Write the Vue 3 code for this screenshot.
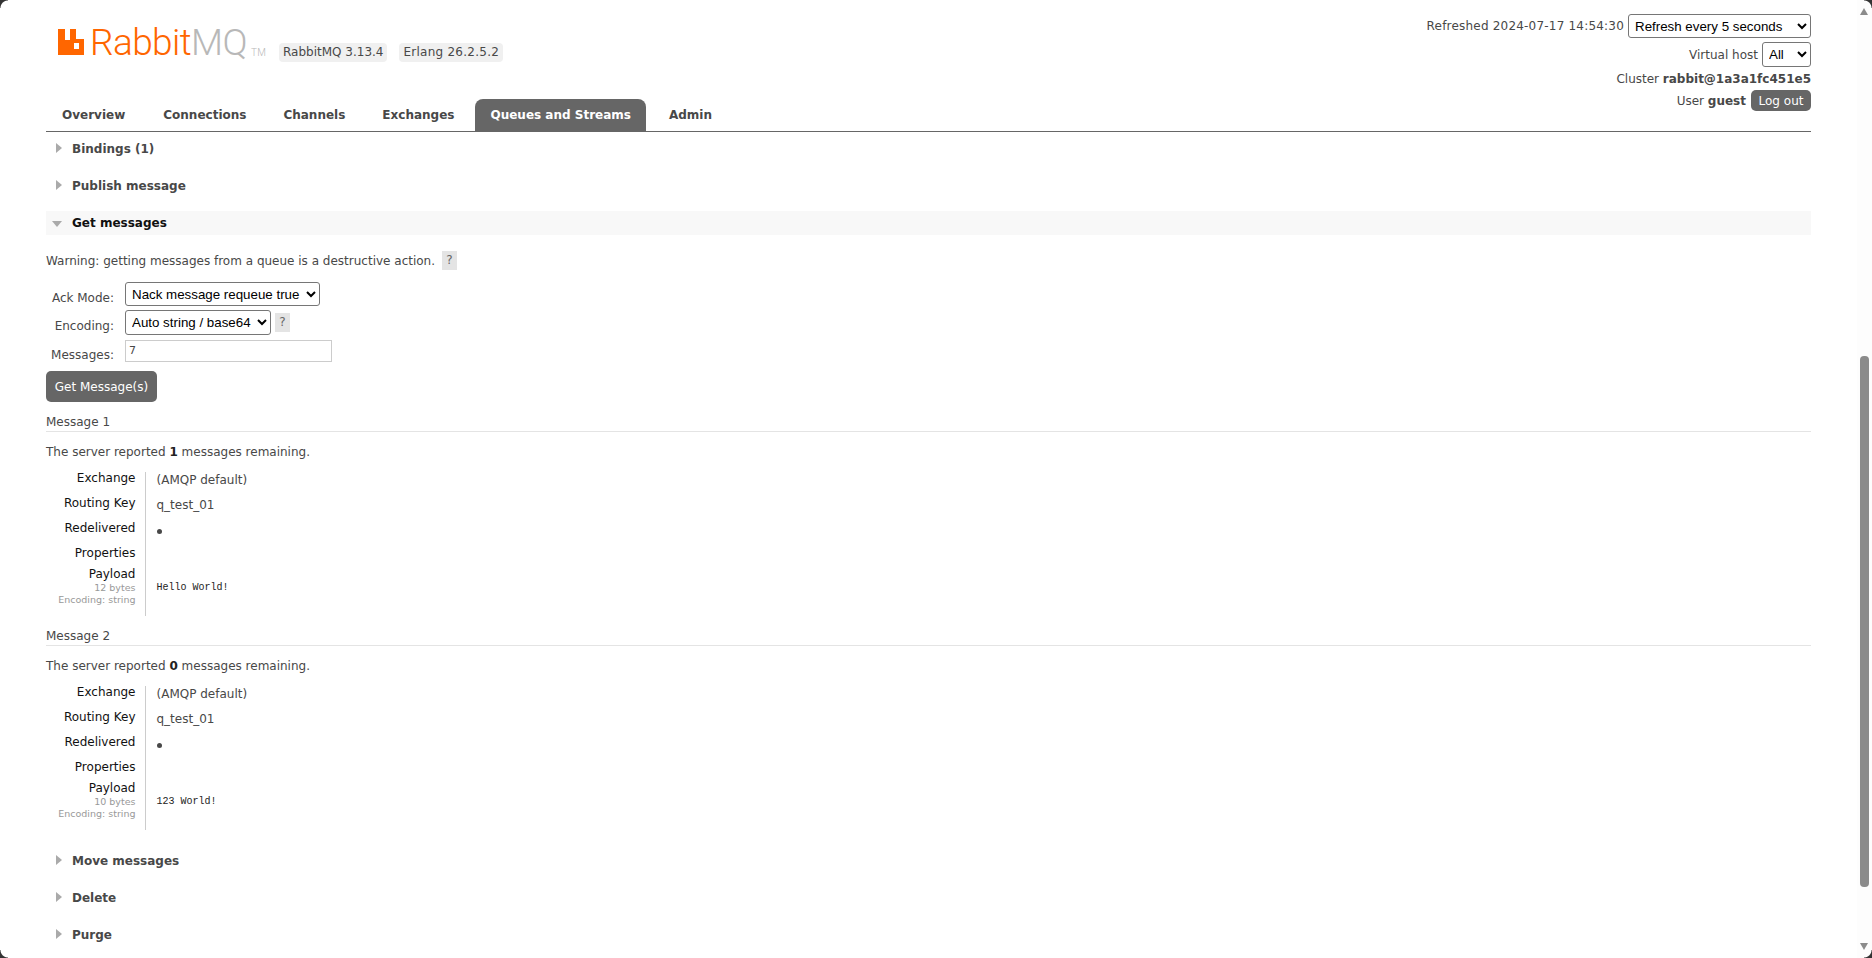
<template>
  <div class="window">
    <div class="page">
      <header class="top">
        <div class="top-left">
          <div class="brand">
            <div class="logo">
              <svg class="logo-mark" viewBox="0 0 26 26" aria-hidden="true">
                <path fill="#ff6600" fill-rule="evenodd" d="M0 0h7v11h5V0h6v10h8v16H0zM16 14v6h5v-6z" />
              </svg>
              <span class="logo-rabbit">Rabbit</span><span class="logo-mq">MQ</span><span class="logo-tm">TM</span>
            </div>
            <div class="versions">
              <span class="version">RabbitMQ 3.13.4</span>
              <span class="version version-erlang">Erlang 26.2.5.2</span>
            </div>
          </div>
          <nav class="tabs">
            <a v-for="tab in tabs" :key="tab" class="tab" :class="{ active: tab === 'Queues and Streams' }">{{ tab }}</a>
          </nav>
        </div>
        <div class="status">
          <div class="status-row row-refresh">
            <span class="stamp">Refreshed 2024-07-17 14:54:30</span>
            <select class="sel sel-refresh"><option>Refresh every 5 seconds</option></select>
          </div>
          <div class="status-row row-vhost">
            <span>Virtual host</span>
            <select class="sel sel-vhost"><option>All</option></select>
          </div>
          <div class="status-row row-cluster"><span>Cluster <b>rabbit@1a3a1fc451e5</b></span></div>
          <div class="status-row row-user">
            <span>User <b>guest</b></span>
            <button class="btn btn-logout">Log out</button>
          </div>
        </div>
      </header>

      <section v-for="name in ['Bindings (1)', 'Publish message']" :key="name" class="section">
        <h2 class="section-title"><i class="arrow-right"></i>{{ name }}</h2>
      </section>

      <section class="section section-open">
        <h2 class="section-title open"><i class="arrow-down"></i>Get messages</h2>
        <p class="warning">Warning: getting messages from a queue is a destructive action. <span class="help">?</span></p>
        <div class="form">
          <div class="form-row row-ack">
            <label>Ack Mode:</label>
            <select class="sel sel-ack"><option>Nack message requeue true</option></select>
          </div>
          <div class="form-row row-enc">
            <label>Encoding:</label>
            <select class="sel sel-enc"><option>Auto string / base64</option></select>
            <span class="help">?</span>
          </div>
          <div class="form-row row-count">
            <label>Messages:</label>
            <input class="count" type="text" value="7" />
          </div>
        </div>
        <button class="btn btn-get">Get Message(s)</button>

        <div v-for="(msg, i) in messages" :key="i" class="message">
          <h3 class="message-title">Message {{ i + 1 }}</h3>
          <p class="remaining">The server reported <b>{{ msg.remaining }}</b> messages remaining.</p>
          <table class="facts">
            <tbody>
              <tr><th>Exchange</th><td>(AMQP default)</td></tr>
              <tr><th>Routing Key</th><td>q_test_01</td></tr>
              <tr><th>Redelivered</th><td><span class="dot"></span></td></tr>
              <tr class="props"><th>Properties</th><td></td></tr>
              <tr class="payload">
                <th>Payload<sub>{{ msg.bytes }} bytes</sub><sub>Encoding: string</sub></th>
                <td><pre>{{ msg.body }}</pre></td>
              </tr>
            </tbody>
          </table>
        </div>
      </section>

      <section v-for="name in ['Move messages', 'Delete', 'Purge']" :key="name" class="section section-tail">
        <h2 class="section-title"><i class="arrow-right"></i>{{ name }}</h2>
      </section>
    </div>

    <div class="scrollbar">
      <i class="sb-up"></i>
      <div class="sb-thumb"></div>
      <i class="sb-down"></i>
    </div>

    <i class="corner corner-tl"></i>
    <i class="corner corner-tr"></i>
    <i class="corner corner-br"></i>
    <i class="corner corner-bl"></i>
  </div>
</template>

<script setup>
const tabs = ['Overview', 'Connections', 'Channels', 'Exchanges', 'Queues and Streams', 'Admin']

const messages = [
  { remaining: 1, bytes: 12, body: 'Hello World!' },
  { remaining: 0, bytes: 10, body: '123 World!' },
]
</script>

<style>
html,
body {
  margin: 0;
  background: #fff;
  overflow: hidden;
}
</style>

<style scoped>
.window {
  position: relative;
  display: flex;
  width: 1872px;
  height: 958px;
  overflow: hidden;
  background: #fff;
  font: 12px "DejaVu Sans", Verdana, sans-serif;
  color: #484848;
}

.page {
  flex: 1;
  min-width: 0;
  padding: 0 46px;
}

.top {
  display: flex;
  justify-content: space-between;
  height: 131px;
  border-bottom: 1px solid #666;
}

.top-left {
  display: flex;
  flex-direction: column;
}

.brand {
  display: flex;
  padding: 29px 0 0 12px;
  height: 70px;
  box-sizing: border-box;
}

.logo {
  display: flex;
  align-items: flex-start;
  width: 221px;
  height: 26px;
  font-family: Roboto, "Liberation Sans", sans-serif;
  font-weight: 300;
  font-size: 37px;
  letter-spacing: -0.6px;
  line-height: 28px;
  white-space: nowrap;
}

.logo-mark {
  width: 26px;
  height: 26px;
  flex: none;
  margin-right: 6px;
}

.logo-rabbit {
  color: #ff6600;
}

.logo-mq {
  color: #b8b8b8;
}

.logo-tm {
  margin: 19px 0 0 4px;
  font-size: 10px;
  line-height: 10px;
  letter-spacing: 0.5px;
  color: #b8b8b8;
}

.versions {
  display: flex;
  gap: 12px;
  margin-top: 14px;
}

.version {
  height: 19px;
  line-height: 19px;
  padding: 0 4px;
  border-radius: 4px;
  background: #f0f0f0;
}

.version-erlang {
  letter-spacing: 0.25px;
}

.tabs {
  display: flex;
  gap: 5px;
  margin-top: auto;
}

.tab {
  height: 32px;
  line-height: 33px;
  padding: 0 16px;
  border-radius: 8px 8px 0 0;
  font-weight: bold;
}

.tab:first-child {
  margin-right: 1px;
}

.tab.active {
  padding: 0 15px;
  margin-right: 2px;
  background: #666;
  color: #fff;
}

.status {
  display: flex;
  flex-direction: column;
  align-items: flex-end;
  padding-top: 14px;
}

.status-row {
  display: flex;
  align-items: center;
  gap: 4px;
}

.stamp {
  letter-spacing: 0.2px;
}

.row-vhost {
  margin-top: 4px;
}

.row-cluster {
  margin-top: 4px;
  height: 16px;
}

.row-user {
  margin-top: 3px;
  gap: 5px;
}

.sel {
  box-sizing: border-box;
  font: 13.33px "Liberation Sans", Arial, sans-serif;
  color: #000;
  background: #fff;
  border: 1px solid #767676;
  border-radius: 3px;
  padding: 0 2px;
  margin: 0;
}

.sel-refresh {
  width: 183px;
  height: 24px;
}

.sel-vhost {
  width: 49px;
  height: 25px;
}

.sel-ack {
  width: 195px;
  height: 24px;
}

.sel-enc {
  width: 146px;
  height: 25px;
}

.btn {
  border: 0;
  background: #666;
  color: #fff;
  font-family: inherit;
  margin: 0;
  padding: 0;
}

.btn-logout {
  width: 60px;
  height: 21px;
  border-radius: 5px;
  font-size: 12px;
}

.btn-get {
  display: block;
  width: 111px;
  height: 31px;
  margin-top: 9px;
  border-radius: 5px;
  font-size: 12px;
}

.section {
  height: 24px;
  margin-top: 13px;
}

.section:first-of-type {
  margin-top: 5px;
}

.section-open {
  height: auto;
}

.section-open + .section-tail {
  margin-top: 19px;
}

.section-title {
  position: relative;
  display: block;
  height: 24px;
  line-height: 24px;
  margin: 0;
  padding-left: 26px;
  font-size: 12px;
  font-weight: bold;
}

.section-title.open {
  background: #f8f8f8;
  color: #111;
}

.arrow-right {
  position: absolute;
  left: 10px;
  top: 6px;
  border-style: solid;
  border-width: 5.5px 0 5.5px 6px;
  border-color: transparent transparent transparent #aaa;
}

.arrow-down {
  position: absolute;
  left: 6px;
  top: 10px;
  border-style: solid;
  border-width: 6px 5.5px 0;
  border-color: #aaa transparent transparent;
}

.warning {
  display: flex;
  align-items: center;
  gap: 3px;
  margin: 16px 0 0;
  height: 19px;
  white-space: pre;
}

.help {
  display: inline-block;
  width: 15px;
  height: 19px;
  line-height: 19px;
  text-align: center;
  background: #e4e4e4;
  color: #666;
}

.form {
  display: flex;
  flex-direction: column;
  margin-top: 12px;
}

.form-row {
  display: flex;
  align-items: center;
  gap: 4px;
}

.form-row label {
  width: 68px;
  margin-right: 7px;
  text-align: right;
}

.row-enc {
  margin-top: 4px;
}

.row-count {
  margin-top: 5px;
}

.row-ack label {
  padding-top: 7px;
}

.row-enc label {
  padding-top: 6px;
}

.row-count label {
  padding-top: 7px;
}

.count {
  box-sizing: border-box;
  width: 207px;
  height: 22px;
  margin: 0;
  padding: 0 3px 2px;
  border: 1px solid #ccc;
  font: 11px "DejaVu Sans", Verdana, sans-serif;
  color: #484848;
}

.message-title {
  margin: 12px 0 0;
  height: 17px;
  line-height: 16px;
  font-size: 12px;
  font-weight: normal;
  border-bottom: 1px solid #e4e4e4;
}

.remaining {
  margin: 12px 0 0;
  line-height: 16px;
}

.remaining b {
  color: #222;
}

.facts {
  margin-top: 12px;
  border-collapse: collapse;
}

.facts th {
  width: 99px;
  height: 25px;
  padding: 0 9px 0 0;
  box-sizing: border-box;
  border-right: 1px solid #ccc;
  text-align: right;
  font-weight: normal;
  color: #111;
  vertical-align: top;
  line-height: 13px;
}

.facts td {
  padding: 1px 0 0 11px;
  height: 25px;
  box-sizing: border-box;
  vertical-align: top;
  line-height: 14px;
}

.facts .props th,
.facts .props td {
  height: 20px;
}

.facts .payload th {
  height: 45px;
  padding-bottom: 10px;
  line-height: 15px;
}

.facts sub {
  display: block;
  font-size: 9.5px;
  line-height: 12px;
  vertical-align: baseline;
  color: #999;
}

.facts pre {
  margin: 0;
  padding-top: 13px;
  font: 10px/14px "Liberation Mono", monospace;
  color: #222;
}

.dot {
  display: inline-block;
  width: 5px;
  height: 5px;
  margin-top: 5px;
  border-radius: 50%;
  background: #484848;
}

.scrollbar {
  position: relative;
  flex: none;
  width: 15px;
  background: #fdfdfd;
}

.sb-thumb {
  position: absolute;
  left: 3px;
  top: 356px;
  width: 9px;
  height: 531px;
  border-radius: 4px;
  background: #8b8b8b;
}

.sb-up,
.sb-down {
  position: absolute;
  left: 3px;
  border-style: solid;
  border-color: transparent;
}

.sb-up {
  top: 8px;
  border-width: 0 4.5px 7px;
  border-bottom-color: #8b8b8b;
}

.sb-down {
  top: 943px;
  border-width: 7px 4.5px 0;
  border-top-color: #8b8b8b;
}

.corner {
  position: absolute;
  width: 8px;
  height: 8px;
  background: radial-gradient(circle at var(--c), transparent 7px, #333 8px);
}

.corner-tl {
  top: 0;
  left: 0;
  --c: 100% 100%;
}

.corner-tr {
  top: 0;
  right: 0;
  --c: 0 100%;
}

.corner-br {
  bottom: 0;
  right: 0;
  --c: 0 0;
}

.corner-bl {
  bottom: 0;
  left: 0;
  --c: 100% 0;
}
</style>
